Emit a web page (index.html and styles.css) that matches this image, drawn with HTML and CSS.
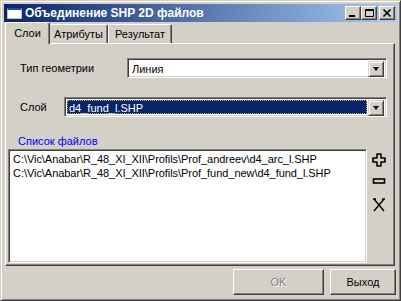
FILE: index.html
```html
<!DOCTYPE html>
<html lang="ru">

<head>
    <meta charset="UTF-8">
    <title>Объединение SHP 2D файлов</title>
    <link rel="stylesheet" href="styles.css">
</head>

<body>
    <div class="window">
        <div class="titlebar">
            <span class="app-icon"></span>
            <span class="title">Объединение SHP 2D файлов</span>
            <div class="caption-buttons">
                <span class="cap-btn">
                    <svg width="14" height="12" viewBox="0 0 14 12"><rect x="3" y="8" width="6" height="2" fill="#000"/></svg>
                </span>
                <span class="cap-btn">
                    <svg width="14" height="12" viewBox="0 0 14 12"><path d="M3.5 2.5h8v7h-8z" fill="none" stroke="#000"/><rect x="3" y="2" width="9" height="2" fill="#000"/></svg>
                </span>
                <span class="cap-btn close">
                    <svg width="14" height="12" viewBox="0 0 14 12"><path d="M3.5 2.5l7 7M10.5 2.5l-7 7" stroke="#000" stroke-width="1.6"/></svg>
                </span>
            </div>
        </div>

        <div class="tabs">
            <div class="tab active">Слои</div>
            <div class="tab">Атрибуты</div>
            <div class="tab">Результат</div>
        </div>

        <div class="panel">
            <div class="row geom-row">
                <label class="label geom-label">Тип геометрии</label>
                <div class="combo geom-combo">
                    <span class="combo-value">Линия</span>
                    <span class="drop-btn"><span class="arrow"></span></span>
                </div>
            </div>

            <div class="row layer-row">
                <label class="label layer-label">Слой</label>
                <div class="combo layer-combo">
                    <span class="combo-value selected">d4_fund_l.SHP</span>
                    <span class="drop-btn"><span class="arrow"></span></span>
                </div>
            </div>

            <div class="files-label">Список файлов</div>

            <div class="files">
                <div class="listbox">
                    <div class="item">C:\Vic\Anabar\R_48_XI_XII\Profils\Prof_andreev\d4_arc_l.SHP</div>
                    <div class="item">C:\Vic\Anabar\R_48_XI_XII\Profils\Prof_fund_new\d4_fund_l.SHP</div>
                </div>
                <div class="tools">
                    <svg class="tool-add" width="14" height="14" viewBox="0 0 14 14">
                        <path d="M5 1h4v4h4v4h-4v4h-4v-4h-4v-4h4z" fill="#D4D0C8" stroke="#000" stroke-width="1.6" stroke-linejoin="round"/>
                    </svg>
                    <svg class="tool-remove" width="14" height="7" viewBox="0 0 14 7">
                        <rect x="1.5" y="1" width="11" height="4" fill="#D4D0C8" stroke="#000" stroke-width="1.6"/>
                    </svg>
                    <svg class="tool-clear" width="14" height="15" viewBox="0 0 14 15">
                        <path d="M1 2h3M10 2h3M2 2l10 12M12 2l-10 12" stroke="#000" stroke-width="1.4" fill="none"/>
                    </svg>
                </div>
            </div>
        </div>

        <div class="footer">
            <button class="btn ok-btn" disabled>OK</button>
            <button class="btn exit-btn">Выход</button>
        </div>
    </div>
</body>
</html>
```

FILE: styles.css
```css
* {
    margin: 0;
    padding: 0;
    box-sizing: border-box;
}

body {
    background-color: #d4d0c8;
    font-family: "Liberation Sans", Arial, sans-serif;
    font-size: 11px;
    color: #000;
}

/* classic window frame */
.window {
    width: 401px;
    height: 301px;
    display: flex;
    flex-direction: column;
    padding: 3px;
    border: 1px solid;
    border-color: #d4d0c8 #404040 #404040 #d4d0c8;
    box-shadow: inset 1px 1px #fff, inset -1px -1px #808080;
    background-color: #d4d0c8;
}

.titlebar {
    height: 18px;
    display: flex;
    align-items: center;
    padding: 0 2px 0 3px;
    background: linear-gradient(to right, #0a246a, #a6caf0);
}

.app-icon {
    width: 15px;
    height: 11px;
    background-color: #fff;
    border: 1px solid #c0c0c0;
    border-top: 2px solid #2a4aa0;
}

.title {
    margin-left: 3px;
    color: #fff;
    font-weight: bold;
    font-size: 12px;
}

.caption-buttons {
    margin-left: auto;
    display: flex;
}

.cap-btn {
    width: 16px;
    height: 14px;
    display: flex;
    align-items: center;
    justify-content: center;
    background-color: #d4d0c8;
    border: 1px solid;
    border-color: #fff #404040 #404040 #fff;
    box-shadow: inset -1px -1px #808080;
}

.cap-btn.close {
    margin-left: 2px;
}

/* tabs */
.tabs {
    height: 21px;
    display: flex;
    align-items: flex-end;
    padding-left: 1px;
    position: relative;
    z-index: 1;
}

.tab {
    height: 19px;
    display: flex;
    align-items: center;
    justify-content: center;
    border: 1px solid;
    border-bottom: none;
    border-color: #fff #404040 #fff #fff;
    border-radius: 2px 2px 0 0;
    box-shadow: inset -1px 0 #808080;
    background-color: #d4d0c8;
}

.tab:nth-child(1) {
    width: 45px;
}

.tab:nth-child(2) {
    width: 58px;
    border-left: none;
}

.tab:nth-child(3) {
    width: 64px;
}

.tab.active {
    height: 22px;
    margin-bottom: -1px;
    padding-bottom: 2px;
}

/* tab page */
.panel {
    height: 223px;
    margin: 0 2px 0 1px;
    border: 1px solid;
    border-color: #fff #404040 #404040 #fff;
    box-shadow: inset -1px -1px #808080;
}

.row {
    display: flex;
    align-items: center;
    height: 20px;
    padding-left: 14px;
}

.geom-row {
    margin-top: 14px;
}

.layer-row {
    margin-top: 19px;
}

.geom-label {
    width: 107px;
}

.layer-label {
    width: 44px;
}

.combo {
    height: 20px;
    display: flex;
    padding: 2px;
    background-color: #fff;
    border: 1px solid;
    border-color: #808080 #fff #fff #808080;
    box-shadow: inset 1px 1px #404040, inset -1px -1px #d4d0c8;
}

.geom-combo {
    width: 260px;
}

.layer-combo {
    width: 323px;
}

.combo-value {
    flex: 1;
    line-height: 16px;
    padding-left: 2px;
}

.combo-value.selected {
    margin-right: 1px;
    background-color: #0a246a;
    color: #fff;
    outline: 1px dotted #b8a060;
    outline-offset: -1px;
}

.drop-btn {
    width: 16px;
    height: 16px;
    display: flex;
    align-items: center;
    justify-content: center;
    background-color: #d4d0c8;
    border: 1px solid;
    border-color: #d4d0c8 #404040 #404040 #d4d0c8;
    box-shadow: inset 1px 1px #fff, inset -1px -1px #808080;
}

.arrow {
    width: 0;
    height: 0;
    border-left: 3.5px solid transparent;
    border-right: 3.5px solid transparent;
    border-top: 4px solid #000;
}

.files-label {
    margin-top: 17px;
    padding-left: 12px;
    height: 14px;
    line-height: 14px;
    color: #0000ff;
}

.files {
    margin-top: 1px;
    display: flex;
}

.listbox {
    width: 359px;
    height: 114px;
    margin-left: 2px;
    padding: 2px 3px;
    background-color: #fff;
    border: 1px solid;
    border-color: #808080 #fff #fff #808080;
    box-shadow: inset 1px 1px #404040, inset -1px -1px #d4d0c8;
}

.item {
    height: 14px;
    line-height: 14px;
    white-space: nowrap;
    padding-left: 1px;
    letter-spacing: -0.05px;
}

.tools {
    margin-left: 5px;
    display: flex;
    flex-direction: column;
}

.tool-add {
    margin-top: 4px;
}

.tool-remove {
    margin-top: 11px;
}

.tool-clear {
    margin-top: 12px;
}

/* bottom buttons */
.footer {
    flex: 1;
    display: flex;
    justify-content: flex-end;
    align-items: flex-start;
    gap: 6px;
    padding: 3px 1px 0 0;
}

.btn {
    height: 26px;
    background-color: #d4d0c8;
    font-family: "Liberation Sans", Arial, sans-serif;
    font-size: 11px;
    color: #000;
    border: 1px solid;
    border-color: #fff #404040 #404040 #fff;
    box-shadow: inset -1px -1px #808080;
}

.ok-btn {
    width: 91px;
}

.ok-btn:disabled {
    color: #808080;
    text-shadow: 1px 1px #fff;
}

.exit-btn {
    width: 66px;
}
```
